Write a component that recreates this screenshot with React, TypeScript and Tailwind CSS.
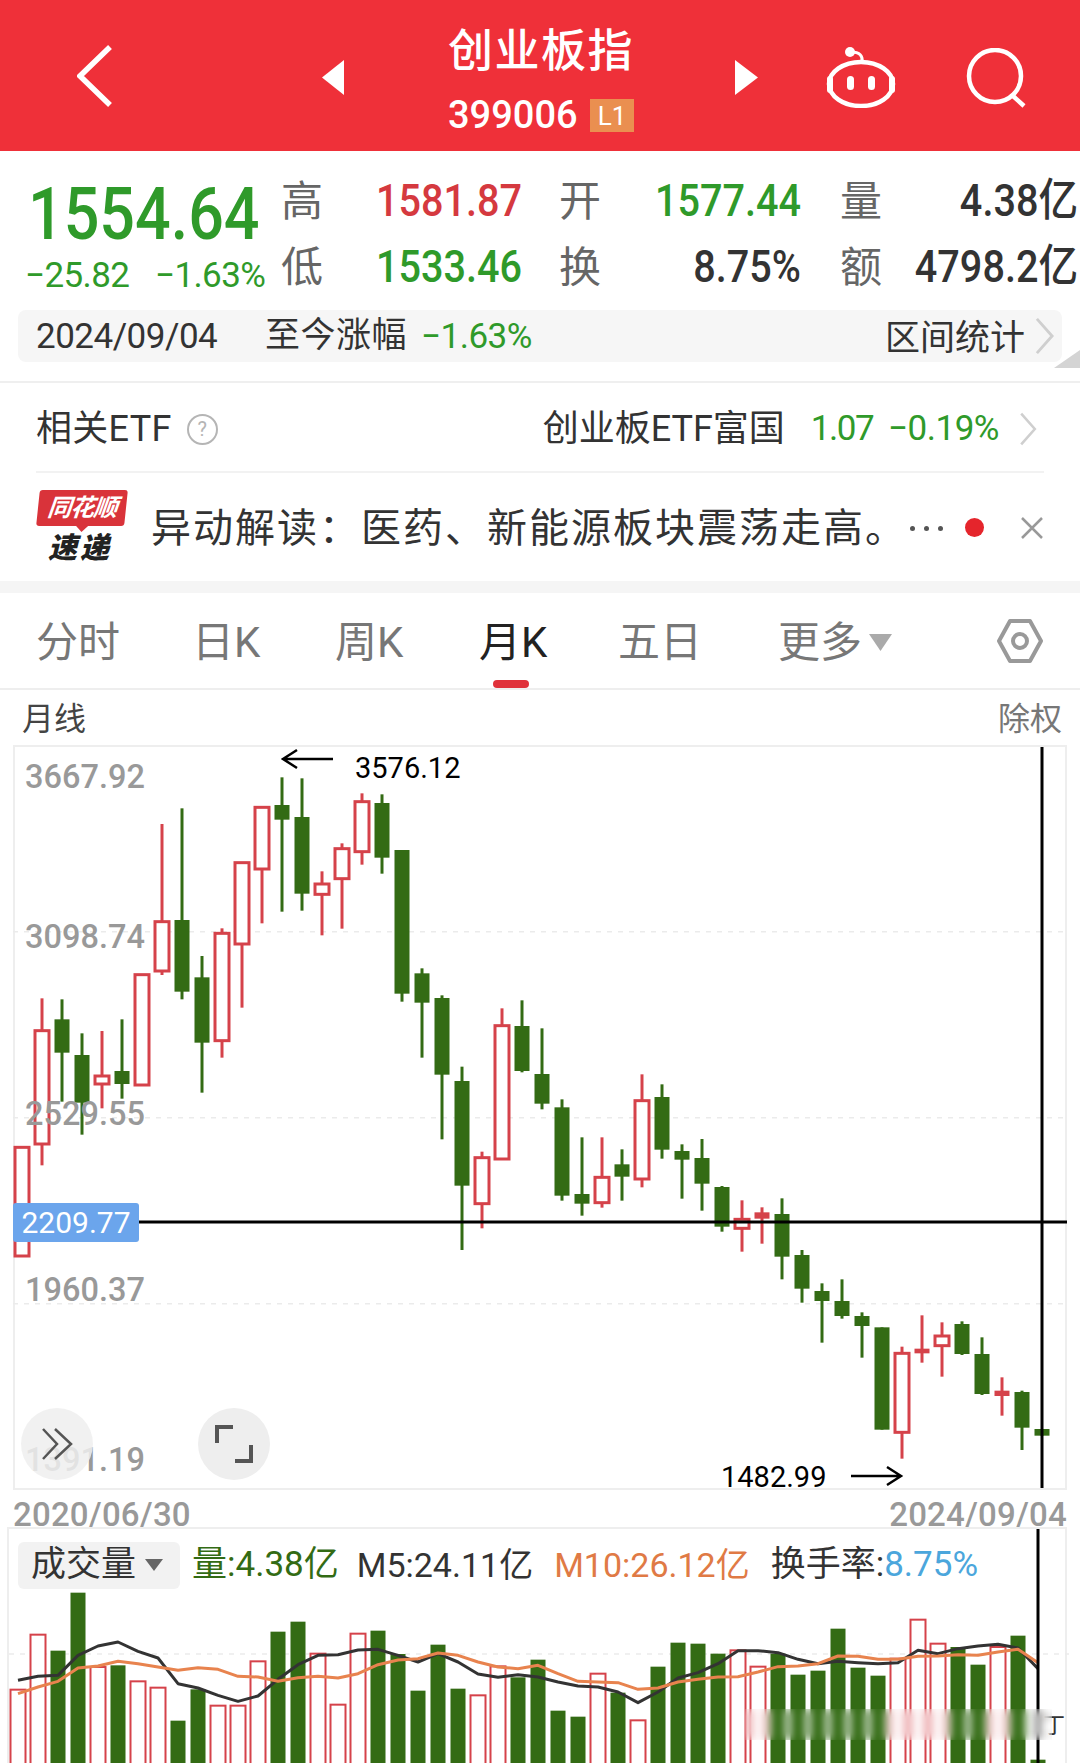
import React from 'react';

const RED = '#D5424A';
const GREEN = '#336B14';

// [wick top, body top, body bottom, wick bottom, up] in chart units, one candle per month
const candles: [number, number, number, number, boolean][] = [
  [1222, 1222, 1548, 1548, true],
  [775, 872, 1212, 1276, true],
  [778, 838, 938, 1085, false],
  [880, 945, 1088, 1184, false],
  [873, 1008, 1032, 1105, true],
  [838, 993, 1032, 1076, false],
  [704, 704, 1035, 1035, true],
  [252, 545, 693, 705, true],
  [205, 540, 755, 778, false],
  [648, 712, 908, 1058, false],
  [565, 580, 902, 953, true],
  [368, 368, 612, 803, true],
  [200, 202, 387, 550, true],
  [112, 195, 239, 515, false],
  [115, 231, 461, 512, false],
  [394, 432, 463, 586, true],
  [310, 326, 416, 566, true],
  [160, 185, 335, 374, true],
  [163, 189, 353, 401, false],
  [330, 330, 761, 785, false],
  [685, 700, 788, 953, false],
  [766, 774, 1004, 1198, false],
  [980, 1023, 1337, 1530, false],
  [1235, 1253, 1391, 1465, true],
  [805, 857, 1257, 1260, true],
  [781, 858, 993, 997, false],
  [865, 1002, 1091, 1108, false],
  [1078, 1102, 1367, 1382, false],
  [1192, 1362, 1391, 1427, false],
  [1192, 1312, 1388, 1403, true],
  [1228, 1273, 1310, 1382, false],
  [1003, 1082, 1317, 1342, true],
  [1033, 1071, 1229, 1256, false],
  [1213, 1233, 1259, 1376, false],
  [1197, 1254, 1331, 1412, false],
  [1338, 1341, 1460, 1475, false],
  [1381, 1438, 1465, 1535, true],
  [1402, 1417, 1436, 1511, true],
  [1375, 1422, 1550, 1618, false],
  [1530, 1545, 1646, 1688, false],
  [1630, 1653, 1683, 1808, false],
  [1618, 1683, 1728, 1736, false],
  [1717, 1728, 1758, 1853, false],
  [1762, 1762, 2069, 2069, false],
  [1820, 1840, 2077, 2156, true],
  [1726, 1826, 1840, 1868, true],
  [1747, 1788, 1817, 1910, true],
  [1744, 1752, 1842, 1845, false],
  [1792, 1842, 1962, 1965, false],
  [1912, 1952, 1968, 2027, true],
  [1952, 1956, 2063, 2130, false],
  [2067, 2067, 2087, 2087, false],
];

// [bar top, up] in chart units
const volumes: [number, boolean][] = [
  [1343, true], [1178, true], [1226, false], [1052, false], [1275, true], [1270, false], [1318, true],
  [1337, true], [1436, false], [1342, false], [1391, true], [1391, true], [1258, true], [1169, false],
  [1139, false], [1235, true], [1388, true], [1175, true], [1166, false], [1236, false], [1346, false],
  [1208, false], [1340, false], [1360, true], [1273, true], [1306, false], [1253, false], [1406, false],
  [1424, false], [1295, true], [1352, false], [1435, true], [1274, false], [1202, false], [1205, false],
  [1235, false], [1225, true], [1274, true], [1235, false], [1298, false], [1286, false], [1160, false],
  [1277, false], [1301, false], [1250, true], [1133, true], [1205, true], [1215, false], [1268, false],
  [1215, true], [1181, false], [1553, false],
];

const ma5 = [1315, 1303, 1300, 1240, 1212, 1200, 1228, 1248, 1325, 1338, 1360, 1378, 1362, 1312, 1268, 1240, 1238, 1224, 1222, 1240, 1260, 1235, 1260, 1296, 1306, 1298, 1305, 1320, 1332, 1335, 1350, 1382, 1350, 1308, 1292, 1265, 1226, 1226, 1232, 1252, 1265, 1258, 1262, 1265, 1262, 1225, 1235, 1220, 1212, 1207, 1218, 1280];
const ma10 = [1355, 1335, 1318, 1278, 1272, 1258, 1265, 1275, 1285, 1277, 1282, 1303, 1305, 1318, 1307, 1303, 1308, 1295, 1268, 1254, 1250, 1233, 1240, 1260, 1275, 1280, 1270, 1295, 1318, 1320, 1322, 1342, 1338, 1320, 1312, 1305, 1304, 1290, 1274, 1272, 1265, 1242, 1243, 1252, 1252, 1243, 1242, 1238, 1240, 1230, 1222, 1262];

const candleY = (v: number) => 740 + v / 3;
const volY = (v: number) => 1240 + v / 3;

const linePoints = (values: number[]) => values.map((v, i) => `${16 + i * 20},${volY(v)}`).join(' ');

const Candles: React.FC = () => (
  <svg viewBox="13 747 1054 741" className="block w-[1054px] h-[741px]">
    {[931.7, 1117.7, 1303.7].map(y => (
      <line key={y} x1="13" x2="1067" y1={y} y2={y} stroke="#EBEBEB" strokeWidth="1.5" strokeDasharray="5 6" />
    ))}
    {candles.map(([wickTop, top, bottom, wickBottom, up], i) => {
      const x = 22 + i * 20;
      const color = up ? RED : GREEN;
      const solid = bottom - top < 20;
      return (
        <g key={i}>
          <line x1={x} x2={x} y1={candleY(wickTop)} y2={candleY(wickBottom)} stroke={color} strokeWidth="3" />
          {up && !solid ? (
            <rect x={x - 7} y={candleY(top)} width="14" height={(bottom - top) / 3} fill="#fff" stroke={color} strokeWidth="3" />
          ) : (
            <rect x={x - 7.5} y={candleY(top)} width="15" height={(bottom - top) / 3} fill={color} />
          )}
        </g>
      );
    })}
    <line x1="13" x2="1067" y1="1222" y2="1222" stroke="#000" strokeWidth="3" />
    <line x1="1042" x2="1042" y1="747" y2="1488" stroke="#000" strokeWidth="3" />
    <path d="M333 759H283M297 750L283 759L297 768" fill="none" stroke="#000" strokeWidth="2.5" />
    <path d="M851 1476H901M887 1467L901 1476L887 1485" fill="none" stroke="#000" strokeWidth="2.5" />
  </svg>
);

const Volumes: React.FC = () => (
  <svg viewBox="7 1527 1060 236" className="absolute inset-0 w-[1060px] h-[236px]">
    <line x1="7" x2="1067" y1="1652" y2="1652" stroke="#EBEBEB" strokeWidth="1.5" strokeDasharray="5 6" />
    {volumes.map(([top, up], i) => {
      const x = 16 + i * 20;
      return up ? (
        <rect key={i} x={x - 7.5} y={volY(top)} width="15" height="300" fill="#fff" stroke={RED} strokeWidth="2" />
      ) : (
        <rect key={i} x={x - 7.5} y={volY(top)} width="15" height="300" fill={GREEN} />
      );
    })}
    <polyline points={linePoints(ma5)} fill="none" stroke="#333" strokeWidth="3" strokeLinejoin="round" />
    <polyline points={linePoints(ma10)} fill="none" stroke="#E8834E" strokeWidth="3" strokeLinejoin="round" />
    <line x1="1036" x2="1036" y1="1527" y2="1763" stroke="#000" strokeWidth="3" />
  </svg>
);

const Chevron: React.FC<{ className?: string }> = ({ className }) => (
  <svg viewBox="0 0 20 40" className={className}>
    <path d="M2 2L18 20L2 38" fill="none" stroke="#CFCFCF" strokeWidth="3" />
  </svg>
);

const Triangle: React.FC<{ className?: string; points: string; fill: string }> = ({ className, points, fill }) => (
  <svg viewBox="0 0 20 20" preserveAspectRatio="none" className={className}>
    <polygon points={points} fill={fill} />
  </svg>
);

const App: React.FC = () => {
  const tabs = [
    { name: '分时', width: 'w-[156px]' },
    { name: '日K', width: 'w-[143px]' },
    { name: '周K', width: 'w-[144px]' },
    { name: '月K', width: 'w-[139px]', active: true },
    { name: '五日', width: 'w-[160px]' },
  ];

  const statLabel = 'text-right text-[42px] text-[#666]';
  const statValue = 'text-right text-[45px] font-medium origin-right scale-x-[.88]';
  const axisLabel = 'absolute left-[12px] text-[32.5px] leading-[33px] text-[#999] font-medium';

  return (
    <div className="relative w-[1080px] h-[1763px] overflow-hidden bg-white font-['Roboto','Noto_Sans_CJK_SC',sans-serif] text-[#333]">
      {/* header */}
      <header className="flex items-center h-[151px] pl-[77px] bg-[#EF3039] text-white">
        <svg viewBox="0 0 35 62" className="w-[35px] h-[62px]">
          <path d="M33 2L3 31L33 60" fill="none" stroke="#fff" strokeWidth="5.5" />
        </svg>
        <Triangle className="ml-[210px] mt-[4px] w-[22px] h-[35px]" points="20,0 20,20 0,10" fill="#fff" />
        <div className="self-start ml-[104px] w-[190px] pt-[26px]">
          <div className="text-[45px] leading-[52px] tracking-[1.5px] font-medium">创业板指</div>
          <div className="flex items-center mt-[21px] h-[33px]">
            <span className="text-[38px] leading-[33px] w-[142px] font-medium">399006</span>
            <span className="flex items-center justify-center w-[44px] h-[33px] bg-[#EA8F50] text-[26px] leading-none">L1</span>
          </div>
        </div>
        <Triangle className="ml-[97px] mt-[4px] w-[23px] h-[35px]" points="0,0 20,10 0,20" fill="#fff" />
        <svg viewBox="0 0 70 62" className="ml-[68px] w-[70px] h-[62px] mt-[3px]">
          <ellipse cx="35" cy="38" rx="32" ry="22" fill="none" stroke="#fff" strokeWidth="4.5" />
          <circle cx="24" cy="6" r="5" fill="#fff" />
          <path d="M25 6C34 6 37 10 36 16" fill="none" stroke="#fff" strokeWidth="3" />
          <rect x="21" y="30" width="7" height="14" rx="3.5" fill="#fff" />
          <rect x="42" y="30" width="7" height="14" rx="3.5" fill="#fff" />
          <rect x="1" y="30" width="6" height="17" rx="3" fill="#fff" />
          <rect x="63" y="30" width="6" height="17" rx="3" fill="#fff" />
        </svg>
        <svg viewBox="0 0 60 60" className="ml-[70px] mt-[4px] w-[60px] h-[60px]">
          <circle cx="29" cy="28" r="26" fill="none" stroke="#fff" strokeWidth="4.5" />
          <path d="M47 48L58 58" fill="none" stroke="#fff" strokeWidth="4.5" />
        </svg>
      </header>

      {/* quote */}
      <section className="flex h-[159px] pt-[17px]">
        <div className="w-[281px] shrink-0 text-[#2F9A2A]">
          <div className="pl-[28px] text-[73px] leading-[66px] font-medium origin-[28px_0] scale-x-[.86] mt-[13px]">1554.64</div>
          <div className="flex pl-[25px] mt-[7px] text-[35px] leading-[44px] tracking-[-0.6px]">
            <span className="w-[130px]">−25.82</span>
            <span>−1.63%</span>
          </div>
        </div>
        <div className="grid grid-cols-[40px_201px_79px_200px_81px_196px] auto-rows-[66px] items-center h-[132px]">
          <span className={statLabel}>高</span>
          <span className={`${statValue} text-[#D5393F]`}>1581.87</span>
          <span className={statLabel}>开</span>
          <span className={`${statValue} text-[#2F9A2A]`}>1577.44</span>
          <span className={statLabel}>量</span>
          <span className={`${statValue} text-[#333]`}>4.38亿</span>
          <span className={statLabel}>低</span>
          <span className={`${statValue} text-[#2F9A2A]`}>1533.46</span>
          <span className={statLabel}>换</span>
          <span className={`${statValue} text-[#333]`}>8.75%</span>
          <span className={statLabel}>额</span>
          <span className={`${statValue} text-[#333]`}>4798.2亿</span>
        </div>
      </section>

      <div className="relative h-[71px]">
        <div className="flex items-center mx-[18px] h-[52px] pl-[18px] pr-[7px] bg-[#F6F6F6] rounded-lg">
          <span className="w-[229px] text-[35px] tracking-[-0.5px] mt-[2px]">2024/09/04</span>
          <span className="w-[156px] text-[35px] leading-[40px] tracking-[0.5px]">至今涨幅</span>
          <span className="text-[35px] text-[#2F9A2A] tracking-[-0.5px] mt-[2px]">−1.63%</span>
          <span className="ml-auto text-[35px] mt-[6px]">区间统计</span>
          <Chevron className="ml-[9px] w-[21px] h-[38px]" />
        </div>
        <div className="absolute right-0 top-[40px] w-[26px] h-[18px] bg-[#D4D4D4] [clip-path:polygon(100%_0,100%_100%,0_100%)]" />
      </div>

      {/* etf */}
      <section className="border-t-2 border-[#EFEFEF]">
        <div className="flex items-center h-[90px] pt-[4px] mx-[36px] border-b-2 border-[#F2F2F2] text-[36px]">
          <span className="tracking-[0.3px]">相关ETF</span>
          <span className="flex items-center justify-center ml-[15px] w-[31px] h-[31px] rounded-full border-2 border-[#B5B5B5] text-[20px] text-[#B5B5B5]">?</span>
          <span className="ml-auto">创业板ETF富国</span>
          <span className="ml-[26px] text-[35px] text-[#2F9A2A] tracking-[-1.5px]">1.07</span>
          <span className="ml-[15px] text-[35px] text-[#2F9A2A] tracking-[-0.5px]">−0.19%</span>
          <Chevron className="ml-[20px] mr-[7px] w-[18px] h-[34px]" />
        </div>
        <div className="flex items-center h-[108px] pl-[38px]">
          <div className="w-[88px] h-[72px] shrink-0 -mt-[2px]">
            <div className="relative flex items-center justify-center h-[36px] bg-[#D9333A] rounded-[3px] -skew-x-6 text-[24px] leading-none font-bold italic text-white tracking-[-1px]">
              同花顺
              <div className="absolute left-[40px] top-[36px] w-0 h-0 border-x-[6px] border-x-transparent border-t-[6px] border-t-[#D9333A]" />
            </div>
            <div className="pl-[10px] mt-[7px] text-[29px] leading-[30px] font-black italic text-[#222] tracking-[3px]">速递</div>
          </div>
          <span className="ml-[25px] mt-[3px] text-[40px] tracking-[2px] whitespace-nowrap">异动解读：医药、新能源板块震荡走高。</span>
          <div className="absolute left-[910px] top-[526px] flex gap-[9px]">
            <span className="w-[5px] h-[5px] rounded-full bg-[#555]" />
            <span className="w-[5px] h-[5px] rounded-full bg-[#555]" />
            <span className="w-[5px] h-[5px] rounded-full bg-[#555]" />
          </div>
          <span className="absolute left-[965px] top-[518px] w-[19px] h-[19px] rounded-full bg-[#E5252C]" />
          <svg viewBox="0 0 24 22" className="absolute left-[1020px] top-[517px] w-[24px] h-[22px]">
            <path d="M2 1L22 21M22 1L2 21" fill="none" stroke="#999" strokeWidth="2.5" />
          </svg>
        </div>
      </section>

      <div className="h-[12px] bg-[#F5F5F5]" />

      {/* tabs */}
      <nav className="relative flex items-center h-[97px] pl-[36px] pt-[4px] border-b-2 border-[#EEEEEE] text-[42px] text-[#777]">
        {tabs.map(tab => (
          <span key={tab.name} className={`${tab.width} ${tab.active ? 'text-[#222]' : ''}`}>{tab.name}</span>
        ))}
        <span>更多</span>
        <Triangle className="ml-[7px] w-[23px] h-[17px]" points="0,0 20,0 10,20" fill="#AAAAAA" />
        <svg viewBox="0 0 46 46" className="ml-[105px] -mt-[4px] w-[46px] h-[46px]">
          <path d="M13 3H33L44 23L33 43H13L2 23Z" fill="none" stroke="#999" strokeWidth="4" strokeLinejoin="round" />
          <circle cx="23" cy="23" r="7" fill="none" stroke="#999" strokeWidth="4" />
        </svg>
        <div className="absolute left-[493px] bottom-0 w-[36px] h-[8px] rounded-full bg-[#E0313A]" />
      </nav>

      <div className="flex justify-between items-center h-[57px] pl-[22px] pr-[18px] text-[32px] text-[#444]">
        <span>月线</span>
        <span className="text-[#777]">除权</span>
      </div>

      {/* candlesticks */}
      <section className="relative ml-[13px] w-[1054px] h-[741px] border-y-2 border-[#EEEEEE] box-content -mt-[2px]">
        <div className="absolute inset-0 border-x-2 border-[#EEEEEE]" />
        <div className="absolute inset-0">
          <Candles />
        </div>
        <span className={`${axisLabel} top-[14px]`}>3667.92</span>
        <span className={`${axisLabel} top-[174px]`}>3098.74</span>
        <span className={`${axisLabel} top-[351px]`}>2529.55</span>
        <span className={`${axisLabel} top-[527px]`}>1960.37</span>
        <span className={`${axisLabel} top-[697px]`}>1391.19</span>
        <span className="absolute left-0 top-[456px] flex items-center justify-center w-[126px] h-[39px] bg-[#6BA5EC] rounded-[3px] text-[30px] text-white">2209.77</span>
        <span className="absolute left-[342px] top-[6px] text-[29px] leading-[30px] text-black">3576.12</span>
        <span className="absolute left-[708px] top-[715px] text-[29px] leading-[30px] text-black">1482.99</span>
        <div className="absolute left-[8px] top-[661px] flex items-center justify-center w-[72px] h-[72px] rounded-full bg-[#EEEEEE]/85">
          <svg viewBox="0 0 36 36" className="w-[36px] h-[36px]">
            <path d="M4 3L18 18L4 33M16 3L32 18L16 33" fill="none" stroke="#555" strokeWidth="2.5" />
          </svg>
        </div>
        <div className="absolute left-[185px] top-[661px] flex items-center justify-center w-[72px] h-[72px] rounded-full bg-[#EEEEEE]">
          <svg viewBox="0 0 38 38" className="w-[38px] h-[38px]">
            <path d="M18 2H2V18M36 20V36H20" fill="none" stroke="#555" strokeWidth="4" />
          </svg>
        </div>
      </section>

      <div className="flex justify-between h-[37px] pt-[11px] px-[13px] text-[33px] tracking-[0.2px] leading-[28px] text-[#999] font-medium">
        <span>2020/06/30</span>
        <span>2024/09/04</span>
      </div>

      {/* volume */}
      <section className="relative ml-[7px] w-[1060px] h-[236px] border-t-2 border-x-2 border-[#EEEEEE] box-border">
        <Volumes />
        <div className="relative flex items-center pt-[10px] pl-[9px] text-[35px]">
          <div className="flex items-center w-[162px] h-[47px] pl-[13px] bg-[#F2F2F2] rounded-md text-[#333]">
            成交量
            <Triangle className="ml-[9px] w-[18px] h-[12px]" points="0,0 20,0 10,20" fill="#666" />
          </div>
          <span className="ml-[12px] text-[#336B14]">量:4.38亿</span>
          <span className="ml-[18px] text-[34px] text-[#333]">M5:24.11亿</span>
          <span className="ml-[21px] text-[34px] text-[#E07A45]">M10:26.12亿</span>
          <span className="ml-[21px] text-[#333]">换手率:<span className="text-[#4BA6DC]">8.75%</span></span>
        </div>
        <span className="absolute left-[1034px] top-[186px] text-[22px] leading-none text-[#333]">丁</span>
        <div className="absolute left-[736px] top-[180px] w-[307px] h-[31px] backdrop-blur-[4px]" />
      </section>
    </div>
  );
};

export default App;
